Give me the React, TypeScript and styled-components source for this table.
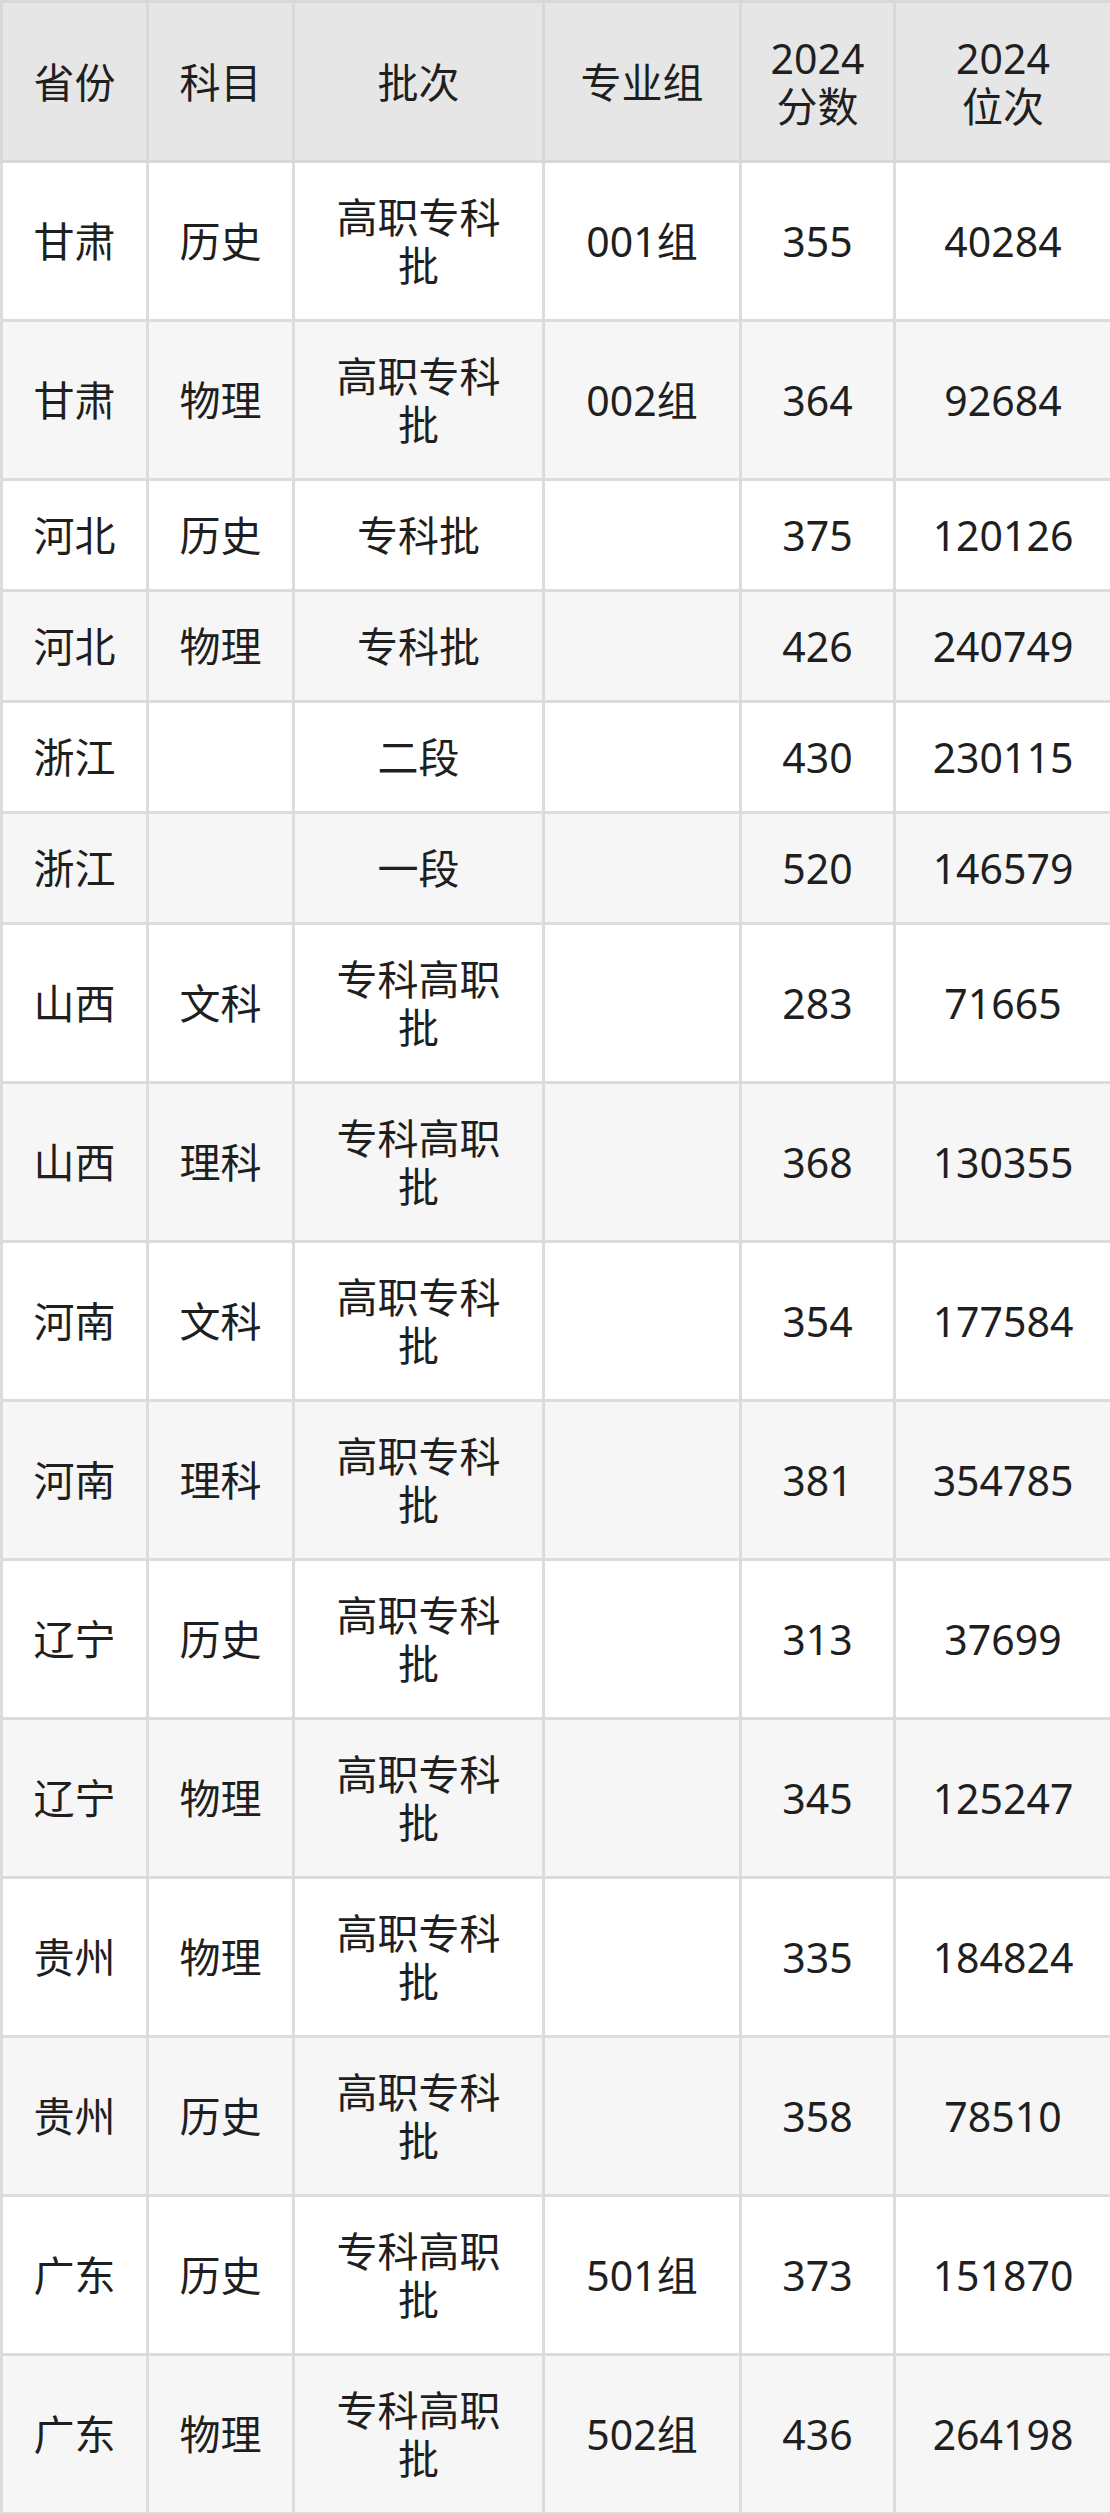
import styled, { createGlobalStyle } from 'styled-components'

const GlobalStyle = createGlobalStyle`
  html, body {
    margin: 0;
    padding: 0;
    background: #ffffff;
  }
  body {
    font-family: "Noto Sans", "Noto Sans CJK SC", sans-serif;
    color: #1f1f1f;
  }
`

type Row = {
  province: string
  subject: string
  batch: string[]
  group: string
  score: string
  rank: string
  tall: boolean
}

const ROWS: Row[] = [
  { province: '甘肃', subject: '历史', batch: ['高职专科', '批'], group: '001组', score: '355', rank: '40284', tall: true },
  { province: '甘肃', subject: '物理', batch: ['高职专科', '批'], group: '002组', score: '364', rank: '92684', tall: true },
  { province: '河北', subject: '历史', batch: ['专科批'], group: '', score: '375', rank: '120126', tall: false },
  { province: '河北', subject: '物理', batch: ['专科批'], group: '', score: '426', rank: '240749', tall: false },
  { province: '浙江', subject: '', batch: ['二段'], group: '', score: '430', rank: '230115', tall: false },
  { province: '浙江', subject: '', batch: ['一段'], group: '', score: '520', rank: '146579', tall: false },
  { province: '山西', subject: '文科', batch: ['专科高职', '批'], group: '', score: '283', rank: '71665', tall: true },
  { province: '山西', subject: '理科', batch: ['专科高职', '批'], group: '', score: '368', rank: '130355', tall: true },
  { province: '河南', subject: '文科', batch: ['高职专科', '批'], group: '', score: '354', rank: '177584', tall: true },
  { province: '河南', subject: '理科', batch: ['高职专科', '批'], group: '', score: '381', rank: '354785', tall: true },
  { province: '辽宁', subject: '历史', batch: ['高职专科', '批'], group: '', score: '313', rank: '37699', tall: true },
  { province: '辽宁', subject: '物理', batch: ['高职专科', '批'], group: '', score: '345', rank: '125247', tall: true },
  { province: '贵州', subject: '物理', batch: ['高职专科', '批'], group: '', score: '335', rank: '184824', tall: true },
  { province: '贵州', subject: '历史', batch: ['高职专科', '批'], group: '', score: '358', rank: '78510', tall: true },
  { province: '广东', subject: '历史', batch: ['专科高职', '批'], group: '501组', score: '373', rank: '151870', tall: true },
  { province: '广东', subject: '物理', batch: ['专科高职', '批'], group: '502组', score: '436', rank: '264198', tall: true },
]

const COL_WIDTHS = [146, 146, 250, 197, 154, 217]

const Table = styled.table`
  width: 1110px;
  table-layout: fixed;
  border-collapse: collapse;
  border: 3px solid #dcdcdc;
  font-size: 41px;
  line-height: 48px;
`

const HeadRow = styled.tr`
  height: 160px;
  background: #e6e6e6;
`

const BodyRow = styled.tr<{ $tall: boolean; $striped: boolean }>`
  height: ${(p) => (p.$tall ? '159px' : '111px')};
  background: ${(p) => (p.$striped ? '#f6f6f6' : '#ffffff')};
`

const HeadCell = styled.th`
  border: 3px solid #d8d8d8;
  font-weight: 400;
  text-align: center;
  vertical-align: middle;
  padding: 0 4px;
  color: #1f1f1f;
`

const Cell = styled.td`
  border: 3px solid #dcdcdc;
  text-align: center;
  vertical-align: middle;
  padding: 0 4px;
  color: #1f1f1f;
`

const Line = styled.span`
  display: block;
  white-space: nowrap;
`

function Lines({ parts }: { parts: string[] }) {
  return (
    <>
      {parts.map((p, i) => (
        <Line key={i}>{p}</Line>
      ))}
    </>
  )
}

export default function App() {
  return (
    <>
      <GlobalStyle />
      <Table>
        <colgroup>
          {COL_WIDTHS.map((w, i) => (
            <col key={i} style={{ width: w }} />
          ))}
        </colgroup>
        <thead>
          <HeadRow>
            <HeadCell>省份</HeadCell>
            <HeadCell>科目</HeadCell>
            <HeadCell>批次</HeadCell>
            <HeadCell>专业组</HeadCell>
            <HeadCell>
              <Lines parts={['2024', '分数']} />
            </HeadCell>
            <HeadCell>
              <Lines parts={['2024', '位次']} />
            </HeadCell>
          </HeadRow>
        </thead>
        <tbody>
          {ROWS.map((r, i) => (
            <BodyRow key={i} $tall={r.tall} $striped={i % 2 === 1}>
              <Cell>{r.province}</Cell>
              <Cell>{r.subject}</Cell>
              <Cell>
                <Lines parts={r.batch} />
              </Cell>
              <Cell>{r.group}</Cell>
              <Cell>{r.score}</Cell>
              <Cell>{r.rank}</Cell>
            </BodyRow>
          ))}
        </tbody>
      </Table>
    </>
  )
}
